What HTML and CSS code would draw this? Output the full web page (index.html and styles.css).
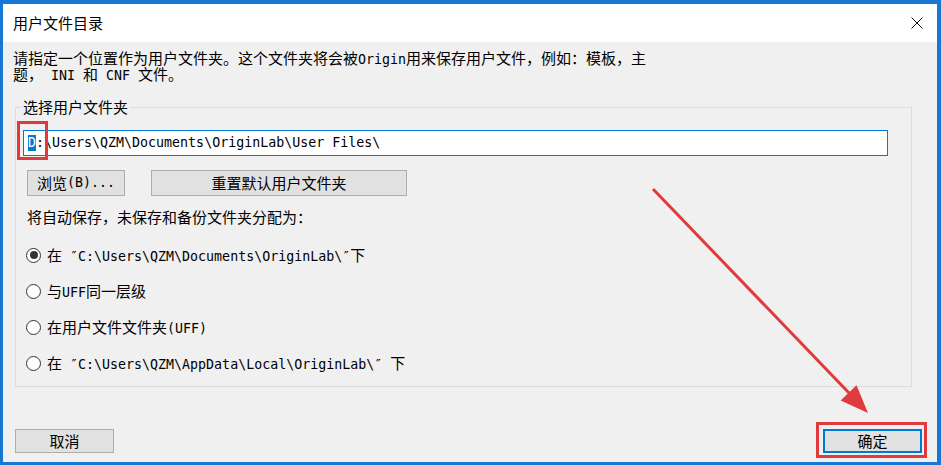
FILE: index.html
```html
<!DOCTYPE html>
<html lang="zh-CN">
<head>
<meta charset="utf-8">
<title>用户文件目录</title>
<link rel="stylesheet" href="styles.css">
</head>
<body>
<div class="window">
  <div class="titlebar">
    <span class="title">用户文件目录</span>
    <svg class="close" width="12" height="12" viewBox="0 0 12 12"><path d="M0.5 0.5L11.5 11.5M11.5 0.5L0.5 11.5" stroke="#111" stroke-width="1" fill="none"/></svg>
  </div>
  <div class="content">
    <div class="desc">
      <div class="line">请指定一个位置作为用户文件夹。这个文件夹将会被<span class="m">Origin</span>用来保存用户文件，例如：模板，主</div>
      <div class="line">题，<span class="m"> INI </span>和<span class="m"> CNF </span>文件。</div>
    </div>
    <fieldset class="group">
      <legend>选择用户文件夹</legend>
      <div class="edit"><span class="m"><span class="sel">D</span>:\Users\QZM\Documents\OriginLab\User Files\</span></div>
      <div class="btnrow">
        <button class="btn browse">浏览<span class="m">(B)...</span></button>
        <button class="btn reset">重置默认用户文件夹</button>
      </div>
      <p class="label">将自动保存，未保存和备份文件夹分配为：</p>
      <div class="radios">
        <div class="radio checked"><span class="circle"></span><span>在<span class="m"> ″C:\Users\QZM\Documents\OriginLab\″</span>下</span></div>
        <div class="radio"><span class="circle"></span><span>与<span class="m">UFF</span>同一层级</span></div>
        <div class="radio"><span class="circle"></span><span>在用户文件文件夹<span class="m">(UFF)</span></span></div>
        <div class="radio"><span class="circle"></span><span>在<span class="m"> ″C:\Users\QZM\AppData\Local\OriginLab\″ </span>下</span></div>
      </div>
    </fieldset>
    <div class="footer">
      <button class="btn action">取消</button>
      <button class="btn action default">确定</button>
    </div>
  </div>
</div>
<svg class="annot" width="941" height="465" viewBox="0 0 941 465">
  <rect x="18.5" y="122.5" width="28" height="36" fill="none" stroke="#e03a3c" stroke-width="3"/>
  <rect x="817.5" y="423.5" width="108" height="33" fill="none" stroke="#e03a3c" stroke-width="3"/>
  <line x1="653" y1="189" x2="850" y2="394" stroke="#e03a3c" stroke-width="3"/>
  <polygon points="868,413 840.7,400.4 856.5,385.2" fill="#e03a3c"/>
</svg>
</body>
</html>
```

FILE: styles.css
```css
* {
  box-sizing: border-box;
  margin: 0;
  padding: 0;
}

body {
  position: relative;
  width: 941px;
  height: 465px;
  overflow: hidden;
  font-family: "Noto Sans CJK SC", sans-serif;
  font-size: 15px;
  line-height: 16px;
  color: #000;
  background: #1877d2;
}

.m {
  font-family: "DejaVu Sans Mono", monospace;
  font-size: 13.3px;
  line-height: 10px;
  white-space: pre;
}

.window {
  width: 941px;
  height: 465px;
  border-style: solid;
  border-color: #1877d2;
  border-width: 4px 4px 3px 3px;
  background: #f0f0f0;
  display: flex;
  flex-direction: column;
}

.titlebar {
  height: 38px;
  background: #fff;
  display: flex;
  align-items: center;
  justify-content: space-between;
  padding: 0 14px 1px 10px;
}

.close {
  display: block;
}

.content {
  flex: 1;
  display: flex;
  flex-direction: column;
  padding: 8px 0 0 10px;
}

.desc {
  white-space: nowrap;
  height: 32px;
}

.line {
  height: 16px;
}

.group {
  margin: 17px 0 0 2px;
  width: 897px;
  min-width: 0;
  border: 1px solid #dcdcdc;
  padding: 15px 0 15px 7px;
}

.group legend {
  padding: 0 2px;
  margin-left: -2px;
  height: 16px;
  line-height: 16px;
}

.edit {
  width: 865px;
  height: 26px;
  border: 1px solid #0078d7;
  background: #fff;
  padding-left: 4px;
  display: flex;
  align-items: center;
}

.sel {
  background: #0078d7;
  color: #fff;
  display: inline-block;
  line-height: 16px;
}

.btnrow {
  display: flex;
  gap: 26px;
  margin: 14px 0 0 4px;
}

.btn {
  height: 26px;
  border: 1px solid #adadad;
  background: #e1e1e1;
  font: inherit;
  color: #000;
  display: flex;
  align-items: center;
  justify-content: center;
}

.browse {
  width: 98px;
}

.reset {
  width: 256px;
}

.label {
  margin: 13px 0 0 4px;
  height: 16px;
}

.radios {
  margin: 22px 0 0 3px;
  display: flex;
  flex-direction: column;
  gap: 20px;
}

.radio {
  height: 16px;
  display: flex;
  align-items: center;
  gap: 6px;
  white-space: nowrap;
}

.circle {
  width: 15px;
  height: 15px;
  border: 1px solid #333;
  border-radius: 50%;
  background: #fff;
  display: flex;
  align-items: center;
  justify-content: center;
}

.checked .circle::after {
  content: "";
  width: 8px;
  height: 8px;
  border-radius: 50%;
  background: #333;
}

.footer {
  margin-top: auto;
  display: flex;
  justify-content: space-between;
  padding: 0 15px 9px 2px;
}

.action {
  width: 99px;
  height: 24px;
}

.default {
  border: 2px solid #0078d7;
}

.annot {
  position: absolute;
  left: 0;
  top: 0;
  pointer-events: none;
}
```
